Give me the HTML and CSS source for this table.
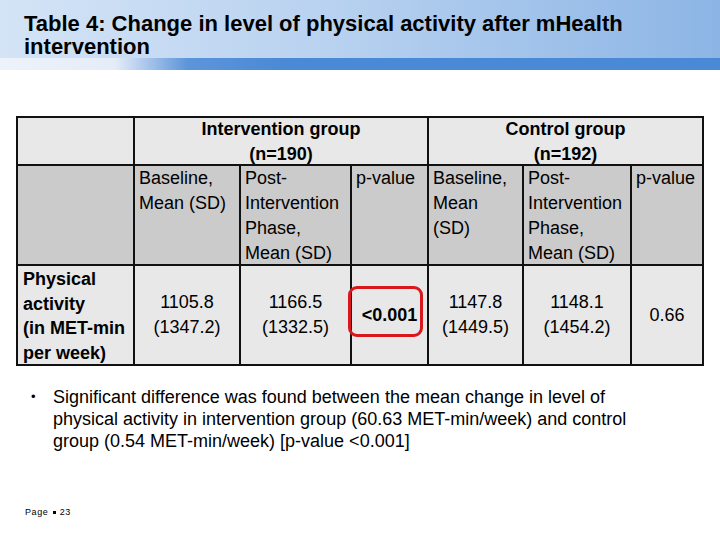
FILE: index.html
```html
<!DOCTYPE html>
<html>
<head>
<meta charset="utf-8">
<link rel="stylesheet" href="styles.css">
</head>
<body>
<div class="slide">
  <header class="title-bar">
    <h1 class="title">Table 4: Change in level of physical activity after mHealth<br>intervention</h1>
  </header>
  <div class="band"></div>
  <main class="content">
    <table class="data">
      <colgroup>
        <col class="c0"><col class="c1"><col class="c2"><col class="c3"><col class="c4"><col class="c5"><col class="c6">
      </colgroup>
      <tr class="r-group">
        <td><div class="cell"></div></td>
        <th colspan="3"><div class="cell">Intervention group<br>(n=190)</div></th>
        <th colspan="3"><div class="cell">Control group<br>(n=192)</div></th>
      </tr>
      <tr class="r-head">
        <td><div class="cell"></div></td>
        <td><div class="cell">Baseline,<br>Mean (SD)</div></td>
        <td><div class="cell">Post-<br>Intervention<br>Phase,<br>Mean (SD)</div></td>
        <td><div class="cell">p-value</div></td>
        <td><div class="cell">Baseline,<br>Mean<br>(SD)</div></td>
        <td><div class="cell">Post-<br>Intervention<br>Phase,<br>Mean (SD)</div></td>
        <td><div class="cell">p-value</div></td>
      </tr>
      <tr class="r-data">
        <th class="label"><div class="cell">Physical<br>activity<br>(in MET-min<br>per week)</div></th>
        <td><div class="cell"><span>1105.8<br>(1347.2)</span></div></td>
        <td><div class="cell"><span>1166.5<br>(1332.5)</span></div></td>
        <td class="sig"><div class="cell"><span class="sig-val">&lt;0.001</span></div><span class="ring"></span></td>
        <td><div class="cell"><span>1147.8<br>(1449.5)</span></div></td>
        <td><div class="cell"><span>1148.1<br>(1454.2)</span></div></td>
        <td><div class="cell"><span>0.66</span></div></td>
      </tr>
    </table>
    <ul class="notes">
      <li>Significant difference was found between the mean change in level of physical activity in intervention group (60.63 MET-min/week) and control group (0.54 MET-min/week) [p-value &lt;0.001]</li>
    </ul>
  </main>
  <footer class="footer">Page <span class="sq"></span> 23</footer>
</div>
</body>
</html>
```
FILE: styles.css
```css
html, body {
  margin: 0;
  padding: 0;
  background: #ffffff;
}
.slide {
  width: 720px;
  height: 540px;
  position: relative;
  font-family: "Liberation Sans", Arial, sans-serif;
  color: #000;
  overflow: hidden;
}
.title-bar {
  height: 58px;
  background: linear-gradient(to right, #d4e4f6 0%, #b9d2f0 45%, #8cb5e5 100%);
  box-sizing: border-box;
  padding: 12px 0 0 24px;
}
.title {
  margin: 0;
  font-size: 22px;
  font-weight: bold;
  line-height: 23px;
}
.band {
  height: 12px;
  background: linear-gradient(to right, #eef3fa 0%, #e4ecf8 16%, #5d95da 26%, #4a89d5 40%, #4a89d5 100%);
}
.content {
  padding: 46px 0 0 16px;
}
.data {
  border-collapse: collapse;
  width: 686px;
  table-layout: fixed;
  font-size: 18px;
  line-height: 25px;
}
.c0 { width: 117px; }
.c1 { width: 106px; }
.c2 { width: 111px; }
.c3 { width: 77px; }
.c4 { width: 95px; }
.c5 { width: 108px; }
.c6 { width: 72px; }
.data td, .data th {
  border: 2px solid #111;
  padding: 0 4px;
  vertical-align: top;
  font-weight: normal;
}
.cell {
  overflow: visible;
}
.r-group td, .r-group th {
  background: #e8e8e8;
  font-weight: bold;
  text-align: center;
}
.r-group .cell {
  height: 46px;
  margin-top: -1px;
  margin-bottom: 1px;
}
.r-head td {
  background: #cbcbcb;
  text-align: left;
}
.r-head .cell {
  height: 98px;
}
.r-data td, .r-data th {
  background: #e8e8e8;
  text-align: center;
}
.r-data .cell {
  height: 98px;
  display: flex;
  align-items: center;
  justify-content: center;
}
.r-data th.label {
  text-align: left;
  font-weight: bold;
  padding: 0 0 0 5px;
}
.r-data th.label .cell {
  display: block;
  line-height: 24.6px;
  margin-top: 1px;
  margin-bottom: -1px;
}
.sig {
  position: relative;
}
.sig-val {
  font-weight: bold;
}
.ring {
  position: absolute;
  left: -4px;
  top: 20px;
  width: 69px;
  height: 45px;
  border: 3px solid #d8181c;
  border-radius: 9px;
}
.notes {
  margin: 20px 0 0 0;
  padding: 0 0 0 37px;
  width: 590px;
  font-size: 18px;
  line-height: 22px;
  list-style: none;
}
.notes li {
  position: relative;
}
.notes li::before {
  content: "•";
  position: absolute;
  left: -22px;
  top: 0;
  font-size: 13px;
}
.footer {
  position: absolute;
  left: 25px;
  top: 507px;
  font-size: 9px;
  line-height: 11px;
  letter-spacing: 0.6px;
}
.sq {
  display: inline-block;
  width: 3px;
  height: 3px;
  background: #000;
  vertical-align: middle;
  margin: 0 1px;
}
```
